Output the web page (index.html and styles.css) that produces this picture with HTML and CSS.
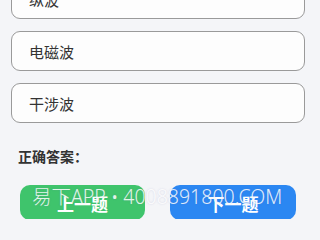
FILE: index.html
```html
<!DOCTYPE html>
<html lang="zh">
<head>
<meta charset="utf-8">
<link rel="stylesheet" href="styles.css">
</head>
<body>
<div class="page">
  <div class="options">
    <div class="option">纵波</div>
    <div class="option">电磁波</div>
    <div class="option">干涉波</div>
  </div>
  <div class="answer">正确答案：</div>
  <div class="buttons">
    <div class="btn prev">上一题</div>
    <div class="btn next">下一题</div>
    <div class="watermark">易下APP • 4008891800.COM</div>
  </div>
</div>
</body>
</html>
```
FILE: styles.css
```css
html, body {
  margin: 0;
  padding: 0;
  background: #f4f5f8;
}
.page {
  display: flow-root;
  overflow: hidden;
  width: 313px;
  height: 219px;
  font-family: "Noto Sans", "Noto Sans CJK SC", sans-serif;
  color: #333;
}
.options {
  display: flex;
  flex-direction: column;
  gap: 12px;
  margin: -21px 8px 0 11px;
}
.option {
  box-sizing: border-box;
  height: 40px;
  border: 1px solid #9a9a9a;
  border-radius: 9px;
  background: #fdfdfd;
  display: flex;
  align-items: center;
  padding-left: 17px;
  font-size: 15px;
  color: #333;
}
.answer {
  margin: 24px 0 0 18px;
  font-size: 14px;
  font-weight: 600;
  line-height: 20px;
  color: #333;
}
.buttons {
  position: relative;
  display: flex;
  gap: 25px;
  margin: 18px 0 0 20px;
}
.btn {
  width: 125px;
  height: 33px;
  border-radius: 10px;
  color: #fff;
  font-size: 17px;
  font-weight: 700;
  display: flex;
  align-items: center;
  justify-content: center;
  padding-top: 2px;
  box-sizing: content-box;
}
.prev { background: #3fc46c; }
.next { background: #2b87f2; width: 126px; }
.watermark {
  position: absolute;
  left: 12px;
  top: -1px;
  font-size: 19.5px;
  line-height: 26px;
  font-weight: 300;
  color: rgba(255, 255, 255, 0.86);
  text-shadow: 0 0 2px rgba(110, 110, 170, 0.25);
  white-space: nowrap;
}
```
